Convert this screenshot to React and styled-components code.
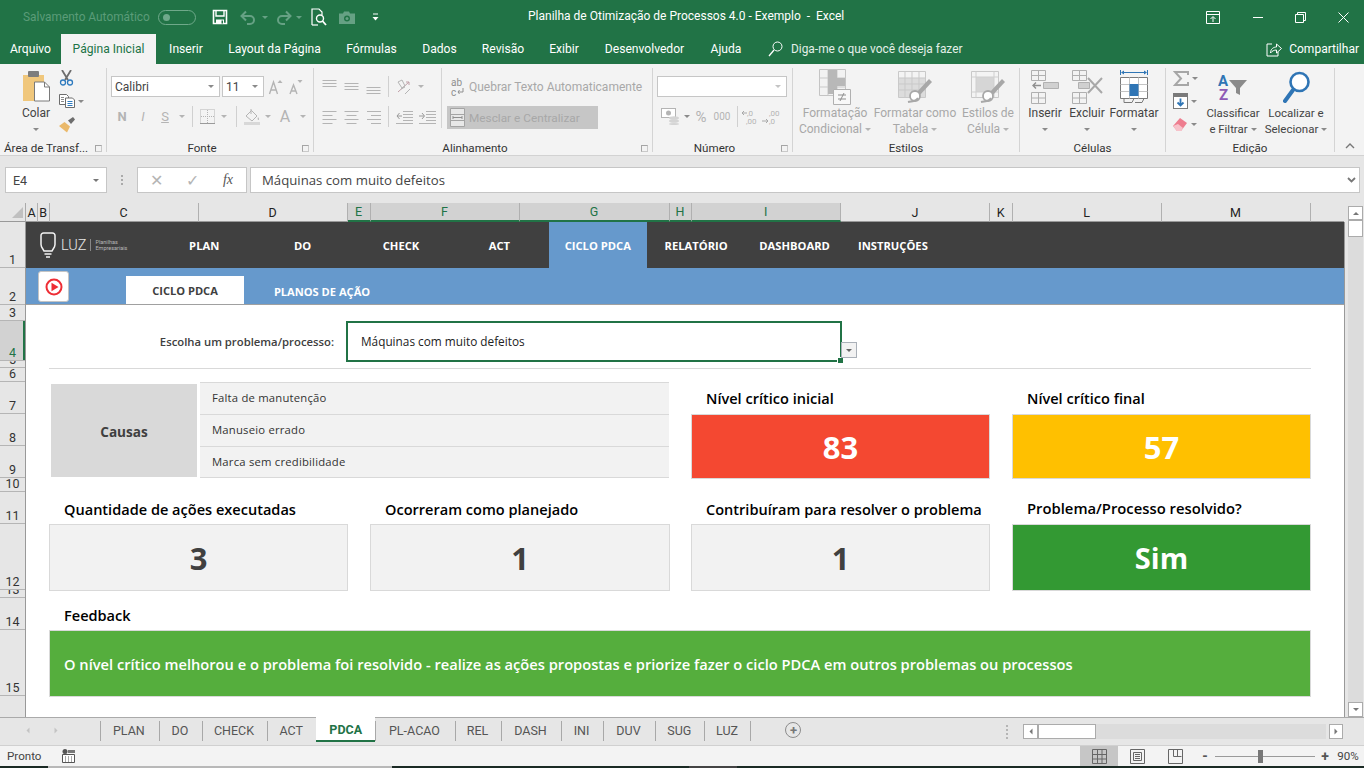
import React from 'react';
import styled, { createGlobalStyle } from 'styled-components';

const GREEN = '#217346';
const DIM = '#b4b4b4';
const UI = "Roboto, 'Liberation Sans', sans-serif";
const SHEET = "'Open Sans', 'Noto Sans', sans-serif";

const Global = createGlobalStyle`
  html, body { margin: 0; padding: 0; background: #e6e6e6; }
  * { box-sizing: border-box; }
`;

const Page = styled.div`
  width: 1364px;
  height: 768px;
  overflow: hidden;
  display: flex;
  flex-direction: column;
  font-family: ${UI};
  background: #e6e6e6;
`;

/* ---------- title bar ---------- */
const TitleBar = styled.div`
  position: relative;
  height: 34px;
  flex: none;
  background: ${GREEN};
  display: flex;
  align-items: center;
  padding-left: 23px;
  color: #fff;
  font-size: 12px;
`;
const AutoSave = styled.span`
  width: 135px;
  color: #5b9c79;
  font-size: 11.9px;
  white-space: nowrap;
`;
const Toggle = styled.span`
  width: 38px;
  height: 15px;
  border: 1px solid #6fa98a;
  border-radius: 8px;
  display: flex;
  align-items: center;
  padding-left: 4px;
  &::before { content: ''; width: 7px; height: 7px; border-radius: 50%; background: #6fa98a; }
`;
const Slot = styled.span`
  flex: none;
  width: ${p => p.$w}px;
  margin-left: ${p => p.$ml || 0}px;
  display: flex;
  align-items: center;
  justify-content: center;
  color: ${p => p.$c || DIM};
  font-family: ${p => p.$serif ? "'Liberation Serif', serif" : 'inherit'};
  font-size: ${p => p.$fs || 12}px;
  font-weight: ${p => p.$fw || 400};
  font-style: ${p => p.$it ? 'italic' : 'normal'};
  text-decoration: ${p => p.$ul ? 'underline' : 'none'};
`;
const WindowTitle = styled.span`
  position: absolute;
  left: 528px;
  top: 9px;
  font-size: 12px;
  white-space: pre;
`;
const WindowBtns = styled.div`
  margin-left: auto;
  display: flex;
  align-items: center;
`;

/* ---------- ribbon tabs ---------- */
const TabRow = styled.div`
  height: 30px;
  flex: none;
  background: ${GREEN};
  display: flex;
  color: #fff;
  font-size: 12.1px;
`;
const RibbonTab = styled.div`
  width: ${p => p.$w}px;
  display: flex;
  align-items: center;
  justify-content: center;
  white-space: nowrap;
  background: ${p => p.$on ? '#f3f3f3' : 'transparent'};
  color: ${p => p.$on ? GREEN : '#fff'};
`;
const Tell = styled.div`
  margin-left: 14px;
  display: flex;
  align-items: center;
  gap: 8px;
  color: #e3efe8;
  font-size: 11.9px;
  white-space: nowrap;
`;
const Share = styled.div`
  margin-left: auto;
  margin-right: 5px;
  display: flex;
  align-items: center;
  gap: 7px;
  font-size: 12px;
`;

/* ---------- ribbon ---------- */
const Ribbon = styled.div`
  height: 92px;
  flex: none;
  background: #f3f3f3;
  border-bottom: 1px solid #d2d2d2;
  display: flex;
  padding: 4px 0 0;
  font-size: 12px;
  color: #444;
`;
const Group = styled.div`
  position: relative;
  flex: none;
  width: ${p => p.$w}px;
  height: 84px;
  border-right: 1px solid #d4d4d4;
  display: flex;
  flex-direction: column;
`;
const GroupBody = styled.div`
  height: 73px;
  flex: none;
  display: flex;
  padding-left: ${p => p.$pl || 0}px;
`;
const Caption = styled.div`
  height: 14px;
  flex: none;
  line-height: 14px;
  text-align: ${p => p.$start ? 'left' : 'center'};
  padding: ${p => p.$start ? '0 0 0 4px' : p.$launch ? '0 16px 0 0' : '0'};
  font-size: 11.6px;
  color: #333;
  white-space: nowrap;
`;
const Launcher = styled.span`
  position: absolute;
  right: 4px;
  bottom: 0;
  width: 7px;
  height: 7px;
  border-left: 1px solid #a5a5a5;
  border-top: 1px solid #a5a5a5;
  border-right: 1px solid #c9c9c9;
  border-bottom: 1px solid #c9c9c9;
`;
const BigButton = styled.div`
  flex: none;
  width: ${p => p.$w}px;
  display: flex;
  flex-direction: column;
  align-items: center;
  color: ${p => p.$off ? '#a8a8a8' : '#444'};
  white-space: nowrap;
  font-size: ${p => p.$fs || 12}px;
`;
const BigIcon = styled.div`
  height: 37px;
  display: flex;
  align-items: center;
  justify-content: center;
`;
const Line = styled.div`
  height: 16px;
  line-height: 16px;
  display: flex;
  align-items: center;
  gap: 3px;
`;
const Caret = styled.span`
  display: inline-block;
  flex: none;
  width: 0;
  height: 0;
  border-left: 3px solid transparent;
  border-right: 3px solid transparent;
  border-top: 3px solid ${p => p.$c || '#8a8a8a'};
  transform: rotate(${p => p.$rot || 0}deg);
`;
const Stack = styled.div`
  flex: none;
  width: ${p => p.$w}px;
  margin-left: ${p => p.$ml || 0}px;
  display: flex;
  flex-direction: column;
  padding-top: ${p => p.$pt || 8}px;
  gap: ${p => p.$gap || 9}px;
  border-right: ${p => p.$edge ? '1px solid #d4d4d4' : 'none'};
  height: ${p => p.$edge ? '60px' : 'auto'};
`;
const ToolRow = styled.div`
  height: ${p => p.$h || 21}px;
  margin-top: ${p => p.$mt || 0}px;
  display: flex;
  align-items: center;
`;
const VSep = styled.span`
  flex: none;
  width: ${p => p.$w}px;
  display: flex;
  justify-content: center;
  align-self: center;
  &::before { content: ''; width: 1px; height: 21px; background: #d0d0d0; }
`;
const Combo = styled.div`
  width: ${p => p.$w}px;
  height: 21px;
  flex: none;
  background: #fff;
  border: 1px solid #c6c6c6;
  margin-right: 2px;
  display: flex;
  align-items: center;
  justify-content: space-between;
  padding: 0 5px 0 3px;
  color: #444;
  font-size: 12px;
`;
const WrapText = styled.span`
  color: #a8a8a8;
  font-size: 12px;
  white-space: nowrap;
`;
const MergeBtn = styled.div`
  width: 151px;
  height: 23px;
  background: #c6c6c6;
  display: flex;
  align-items: center;
  color: #a8a8a8;
  font-size: 11.8px;
  white-space: nowrap;
  padding-left: 3px;
  gap: 4px;
`;
const Collapse = styled.div`
  flex: 1;
  display: flex;
  align-items: flex-end;
  justify-content: center;
  padding-bottom: 6px;
`;

/* ---------- formula bar ---------- */
const FormulaBar = styled.div`
  height: 47px;
  flex: none;
  display: flex;
  align-items: flex-start;
  padding: 11px 4px 0 5px;
`;
const NameBox = styled.div`
  width: 102px;
  height: 26px;
  background: #fff;
  border: 1px solid #c6c6c6;
  display: flex;
  align-items: center;
  justify-content: space-between;
  padding: 0 7px;
  font-size: 12.5px;
  color: #444;
`;
const Dots = styled.div`
  width: 30px;
  height: 26px;
  display: flex;
  align-items: center;
  justify-content: center;
  flex-direction: column;
  gap: 2px;
  & i { width: 2px; height: 2px; background: #aaa; }
`;
const FxBox = styled.div`
  width: 110px;
  height: 26px;
  background: #fff;
  border: 1px solid #c6c6c6;
  display: flex;
  align-items: center;
  margin-right: 3px;
`;
const FormulaInput = styled.div`
  flex: 1;
  height: 26px;
  background: #fff;
  border: 1px solid #c6c6c6;
  display: flex;
  align-items: center;
  justify-content: space-between;
  padding: 0 3px 0 11px;
  font-family: ${SHEET};
  font-size: 13.2px;
  color: #444;
`;

/* ---------- grid area ---------- */
const ColHeaders = styled.div`
  height: 19px;
  flex: none;
  display: flex;
  padding-right: 20px;
`;
const Corner = styled.div`
  width: 26px;
  flex: none;
  display: flex;
  align-items: flex-end;
  justify-content: flex-end;
  padding: 0 2px 3px 0;
  border-right: 1px solid #aaa;
  border-bottom: 1px solid #999;
  &::before {
    content: '';
    width: 0; height: 0;
    border-left: 11px solid transparent;
    border-bottom: 11px solid #c0c0c0;
  }
`;
const ColHead = styled.div`
  width: ${p => p.$w}px;
  flex: ${p => p.$w ? 'none' : 1};
  display: flex;
  align-items: center;
  justify-content: center;
  font-size: 12.5px;
  color: ${p => p.$on ? GREEN : '#222'};
  background: ${p => p.$on ? '#d2d2d2' : 'transparent'};
  border-right: ${p => p.$w ? '1px solid #b0b0b0' : 'none'};
  border-bottom: ${p => p.$on ? `2px solid ${GREEN}` : '1px solid #999'};
`;
const Work = styled.div`
  height: 495px;
  flex: none;
  display: flex;
`;
const RowHeads = styled.div`
  width: 26px;
  flex: none;
  display: flex;
  flex-direction: column;
  border-right: 1px solid #999;
`;
const RowHead = styled.div`
  height: ${p => p.$h}px;
  flex: ${p => p.$h ? 'none' : 1};
  overflow: hidden;
  display: flex;
  align-items: flex-end;
  justify-content: center;
  font-size: 12.5px;
  line-height: 15px;
  color: ${p => p.$on ? GREEN : '#333'};
  background: ${p => p.$on ? '#d2d2d2' : 'transparent'};
  border-bottom: ${p => p.$h ? '1px solid #b5b5b5' : 'none'};
  box-shadow: ${p => p.$on ? `inset -2px 0 0 ${GREEN}` : 'none'};
`;
const Sheet = styled.div`
  width: 1319px;
  flex: none;
  background: #fff;
  border-right: 1px solid #999;
  font-family: ${SHEET};
  display: grid;
  grid-template-columns: 23px 149px 149px 23px 149px 150px 22px 149px 149px 23px 149px 149px 1fr;
  grid-template-rows: 46px 37px 16px 40px 7px 14px 32px 32px 32px 14px 32px 66px 8px 32px 66px 1fr;
`;
const NavBar = styled.div`
  grid-column: 1 / -1;
  grid-row: 1;
  background: #404040;
  display: flex;
  align-items: stretch;
  padding-left: 14px;
`;
const Logo = styled.div`
  width: 115px;
  display: flex;
  align-items: center;
  color: #e8e8e8;
`;
const LogoWord = styled.span`
  font-family: ${UI};
  font-weight: 300;
  font-size: 14.5px;
  margin: 0 4px 0 5px;
`;
const LogoTag = styled.span`
  border-left: 1px solid #888;
  padding-left: 4px;
  font-family: ${UI};
  font-size: 5.5px;
  line-height: 6px;
  color: #b8b8b8;
  white-space: nowrap;
`;
const NavItem = styled.div`
  width: 98.4px;
  display: flex;
  align-items: center;
  justify-content: center;
  color: #fff;
  font-size: 11.2px;
  font-weight: 700;
  white-space: nowrap;
  background: ${p => p.$on ? '#6699cc' : 'transparent'};
`;
const SubBar = styled.div`
  grid-column: 1 / -1;
  grid-row: 2;
  background: #6699cc;
  border-bottom: 1px solid #a0a0a0;
  display: flex;
  align-items: flex-end;
  padding-left: 12px;
`;
const VideoBtn = styled.div`
  width: 31px;
  height: 31px;
  align-self: flex-start;
  margin-top: 3px;
  margin-right: 57px;
  background: #fff;
  border: 1px solid #c4c4c4;
  border-radius: 3px;
  display: flex;
  align-items: center;
  justify-content: center;
`;
const SubTab = styled.div`
  width: ${p => p.$w}px;
  height: 28px;
  padding-top: ${p => p.$on ? 0 : 2}px;
  display: flex;
  align-items: center;
  justify-content: center;
  font-size: 11.1px;
  font-weight: 700;
  background: ${p => p.$on ? '#fff' : 'transparent'};
  color: ${p => p.$on ? '#404040' : '#fff'};
  white-space: nowrap;
`;
const ProblemLabel = styled.div`
  grid-column: 2 / 4;
  grid-row: 4;
  display: flex;
  align-items: center;
  justify-content: flex-end;
  padding: 1px 13px 0 0;
  font-size: 11.3px;
  font-weight: 600;
  color: #404040;
`;
const ProblemCell = styled.div`
  grid-column: 4 / 9;
  grid-row: 4;
  position: relative;
  margin: 0 -2px -1px -1px;
  border: 2px solid ${GREEN};
  display: flex;
  align-items: center;
  padding: 0 0 2px 13px;
  font-size: 11.8px;
  color: #222;
  background: #fff;
`;
const FillHandle = styled.span`
  position: absolute;
  right: -3px;
  bottom: -3px;
  width: 5px;
  height: 5px;
  background: ${GREEN};
  border: 1px solid #fff;
  box-sizing: content-box;
  margin: -1px;
`;
const DropBtn = styled.span`
  position: absolute;
  left: 100%;
  top: 19px;
  margin-left: 1px;
  width: 16px;
  height: 16px;
  background: #f2f2f2;
  border: 1px solid #aab0b8;
  display: flex;
  align-items: center;
  justify-content: center;
`;
const Divider = styled.div`
  grid-column: 2 / 13;
  grid-row: 5;
  align-self: end;
  height: 1px;
  margin: 0 -1px -1px 0;
  background: #d9d9d9;
`;
const CausesHead = styled.div`
  grid-column: 2;
  grid-row: 7 / 10;
  margin: 2px 1px 1px 2px;
  padding-top: 2px;
  background: #d9d9d9;
  display: flex;
  align-items: center;
  justify-content: center;
  font-size: 13.6px;
  font-weight: 700;
  color: #404040;
`;
const CausesList = styled.div`
  grid-column: 3 / 7;
  grid-row: 7 / 10;
  margin-left: 2px;
  display: grid;
  grid-template-rows: 32px 32px 31px;
  border-top: 1px solid #d9d9d9;
`;
const CauseRow = styled.div`
  display: flex;
  align-items: center;
  padding: 0 0 2px 12px;
  background: #f2f2f2;
  border-bottom: 1px solid #d9d9d9;
  font-size: 11.3px;
  letter-spacing: .2px;
  color: #333;
`;
const MetricLabel = styled.div`
  grid-column: ${p => p.$col};
  grid-row: ${p => p.$row};
  align-self: center;
  padding: ${p => p.$low ? '2px' : '0'} 0 0 15px;
  font-size: ${p => p.$fs || 14.55}px;
  font-weight: 600;
  color: #000;
  white-space: nowrap;
`;
const MetricValue = styled.div`
  grid-column: ${p => p.$col};
  grid-row: ${p => p.$row};
  margin: 0 -1px -1px 0;
  border: 1px solid #d9d9d9;
  background: ${p => p.$bg || '#f2f2f2'};
  color: ${p => p.$bg ? '#fff' : '#404040'};
  display: flex;
  align-items: center;
  justify-content: center;
  font-size: ${p => p.$fs || 31}px;
  font-weight: 700;
`;
const Feedback = styled.div`
  grid-column: 2 / 13;
  grid-row: 15;
  margin: 0 -1px -1px 0;
  background: #55ae3d;
  border: 1px solid #d9d9d9;
  color: #fff;
  display: flex;
  align-items: center;
  padding: 0 0 0 14px;
  font-size: 14.67px;
  font-weight: 600;
  white-space: nowrap;
`;

/* ---------- scroll bars ---------- */
const VScroll = styled.div`
  flex: 1;
  margin-top: -16px;
  padding-left: 3px;
  padding-right: 1px;
  display: flex;
  flex-direction: column;
`;
const VTrack = styled.div`
  flex: 1;
  background: #dcdcdc;
  display: flex;
  flex-direction: column;
`;
const ScrollBtn = styled.div`
  flex: none;
  height: ${p => p.$h || 15}px;
  width: ${p => p.$w ? p.$w + 'px' : 'auto'};
  background: #fff;
  border: 1px solid #ababab;
  display: flex;
  align-items: center;
  justify-content: center;
`;
const Thumb = styled.div`
  flex: none;
  width: ${p => p.$w ? p.$w + 'px' : 'auto'};
  height: ${p => p.$h}px;
  background: #fff;
  border: 1px solid #ababab;
`;
const Spacer = styled.div`flex: 1;`;

/* ---------- sheet tabs ---------- */
const SheetTabs = styled.div`
  height: 28px;
  flex: none;
  border-top: 1px solid #aaa;
  display: flex;
  align-items: flex-start;
  padding-left: 100px;
  font-size: 12.5px;
  color: #555;
`;
const SheetTab = styled.div`
  width: ${p => p.$w}px;
  height: ${p => p.$on ? '25px' : '20px'};
  margin-top: ${p => p.$on ? '-1px' : '3px'};
  padding: ${p => p.$on ? '2px 0 0' : '0 2px 1px 0'};
  flex: none;
  display: flex;
  align-items: center;
  justify-content: center;
  border-left: ${p => p.$on ? 'none' : '1px solid #a8a8a8'};
  border-right: ${p => p.$last ? '1px solid #a8a8a8' : 'none'};
  background: ${p => p.$on ? '#fff' : 'transparent'};
  color: ${p => p.$on ? GREEN : '#555'};
  font-weight: ${p => p.$on ? 700 : 400};
  border-bottom: ${p => p.$on ? `2px solid ${GREEN}` : 'none'};
`;
const Plus = styled.div`
  margin: 4px 0 0 34px;
  width: 16px;
  height: 16px;
  border: 1px solid #8c8c8c;
  border-radius: 50%;
  display: flex;
  align-items: center;
  justify-content: center;
  color: #777;
  font-size: 13px;
  font-weight: 700;
  line-height: 1;
`;
const HScroll = styled.div`
  position: absolute;
  left: 1023px;
  top: 7px;
  width: 320px;
  height: 15px;
  display: flex;
`;
const HTrack = styled.div`
  flex: 1;
  display: flex;
  background: #dcdcdc;
  margin-right: 3px;
`;
const TabsWrap = styled.div`
  position: relative;
  flex: none;
`;
const NavArrows = styled.div`
  position: absolute;
  left: 25px;
  top: 12px;
  display: flex;
  gap: 22px;
`;
const TabDots = styled.div`
  position: absolute;
  left: 1006px;
  top: 8px;
  display: flex;
  flex-direction: column;
  gap: 2px;
  & i { width: 2px; height: 2px; background: #b5b5b5; display: block; }
`;

/* ---------- status bar ---------- */
const StatusBar = styled.div`
  height: 21px;
  flex: none;
  background: #f3f3f3;
  border-top: 1px solid #d0d0d0;
  display: flex;
  align-items: stretch;
  padding-left: 7px;
  font-size: 11.6px;
  color: #444;
`;
const Ready = styled.div`
  width: 55px;
  display: flex;
  align-items: center;
`;
const ViewBtn = styled.div`
  width: 38px;
  display: flex;
  align-items: center;
  justify-content: center;
  background: ${p => p.$on ? '#c6c6c6' : 'transparent'};
`;
const Zoom = styled.div`
  display: flex;
  align-items: center;
  margin-left: 4px;
`;
const ZoomTrack = styled.div`
  position: relative;
  width: 100px;
  height: 1px;
  background: #9a9a9a;
  margin: 0 3px;
  &::before {
    content: '';
    position: absolute;
    left: 43px;
    top: -6px;
    width: 5px;
    height: 13px;
    background: #777;
  }
`;
const Taskbar = styled.div`
  height: 2px;
  flex: none;
  display: flex;
  background: #1a2a24;
`;
const TaskPart = styled.div`
  width: ${p => p.$w}px;
  background: ${p => p.$c};
`;

/* ---------- icons ---------- */
const Ico = ({ w = 16, h = 16, children }) => (
  <svg width={w} height={h} viewBox={`0 0 ${w} ${h}`} fill="none">{children}</svg>
);

const SaveIcon = () => (
  <Ico w={16} h={16}>
    <path d="M1.5 1.5h13v13h-13z" stroke="#fff" strokeWidth="1.6" />
    <path d="M4 2v5h8V2" stroke="#fff" strokeWidth="1.4" />
    <path d="M4 15v-4.5h8V15" fill="#fff" />
    <rect x="9.5" y="11.5" width="1.5" height="3" fill={GREEN} />
  </Ico>
);
const UndoIcon = ({ flip }) => (
  <Ico w={16} h={15}>
    <g transform={flip ? 'translate(16 0) scale(-1 1)' : undefined}>
      <path d="M2 6h8a4 4 0 0 1 0 8H7" stroke="#66a184" strokeWidth="2" />
      <path d="M6 1.5 1.5 6 6 10.5" stroke="#66a184" strokeWidth="2" />
    </g>
  </Ico>
);
const PreviewIcon = () => (
  <Ico w={16} h={18}>
    <path d="M1 17V1h7l3 3v3" stroke="#fff" strokeWidth="1.2" />
    <path d="M1 17h6" stroke="#fff" strokeWidth="1.2" />
    <circle cx="9" cy="10.5" r="3.5" stroke="#fff" strokeWidth="1.4" />
    <path d="m11.5 13 3.5 4" stroke="#fff" strokeWidth="1.8" />
  </Ico>
);
const CameraIcon = () => (
  <Ico w={16} h={13}>
    <path d="M0 2.5h4L5 .5h5l1 2h5V13H0z" fill="#66a184" />
    <circle cx="8" cy="7.5" r="3" fill={GREEN} />
    <circle cx="8" cy="7.5" r="1.5" fill="#66a184" />
  </Ico>
);
const QuickCaret = () => (
  <Ico w={7} h={8}>
    <path d="M1 1h5" stroke="#fff" />
    <path d="M.5 4h6L3.5 7.5z" fill="#fff" />
  </Ico>
);
const DisplayIcon = () => (
  <Ico w={14} h={13}>
    <path d="M.5.5h13v12H.5z" stroke="#fff" />
    <path d="M1 3.5h12" stroke="#fff" />
    <path d="M7 11V6M4.5 8 7 5.5 9.5 8" stroke="#fff" />
  </Ico>
);
const Minimize = () => <Ico w={11} h={11}><path d="M0 5.5h10" stroke="#fff" /></Ico>;
const Restore = () => (
  <Ico w={11} h={11}>
    <path d="M.5 2.5h8v8h-8z" stroke="#fff" />
    <path d="M2.5 2.5v-2h8v8h-2" stroke="#fff" />
  </Ico>
);
const CloseX = () => <Ico w={11} h={11}><path d="m.5.5 10 10M10.5.5l-10 10" stroke="#fff" /></Ico>;
const SearchThin = () => (
  <Ico w={15} h={16}>
    <circle cx="9.5" cy="5.5" r="4.5" stroke="#fff" />
    <path d="M6 9 1 15" stroke="#fff" strokeWidth="1.3" />
  </Ico>
);
const ShareIcon = () => (
  <Ico w={16} h={15}>
    <path d="M6 2H1v12h11V10" stroke="#fff" />
    <path d="M4.5 11c0-4 3-6 6-6V2l5 4.5-5 4.5V8c-2.5 0-4.5 1-6 3z" stroke="#fff" />
  </Ico>
);
const PasteIcon = () => (
  <Ico w={30} h={31}>
    <path d="M2 4h21v26H2z" fill="#f0c77c" />
    <rect x="7" y="0" width="11" height="6" rx="1" fill="#7d7d7d" />
    <path d="M13.5 11h10l5 5v14h-15z" fill="#fff" stroke="#7a7a7a" />
    <path d="M23.5 11v5h5" stroke="#7a7a7a" />
  </Ico>
);
const CutIcon = () => (
  <Ico w={15} h={16}>
    <path d="M3 0l6 10M12 0 6 10" stroke="#6d6d6d" strokeWidth="1.8" />
    <circle cx="4" cy="12.5" r="2.5" stroke="#2f7bbf" strokeWidth="1.3" />
    <circle cx="11" cy="12.5" r="2.5" stroke="#2f7bbf" strokeWidth="1.3" />
  </Ico>
);
const CopyIcon = () => (
  <Ico w={16} h={14}>
    <path d="M.5.5h7l2 2v8h-9z" fill="#fff" stroke="#6d6d6d" />
    <path d="M6.5 4h7l2 2v7.5h-9z" fill="#fff" stroke="#6d6d6d" />
    <path d="M8.5 7.5h5M8.5 9.5h5M8.5 11.5h5" stroke="#2f7bbf" />
    <path d="M2 3.5h3M2 5.5h3M2 7.5h3" stroke="#8a8a8a" />
  </Ico>
);
const BrushIcon = () => (
  <Ico w={16} h={16}>
    <path d="M9 3.5 14 0l2 2.5-4 4.5z" fill="#6d6d6d" />
    <path d="M5.5 5 11 9.5 8 15.5 0 9z" fill="#eab96b" />
  </Ico>
);
const FontA = ({ s = 16, up, dn }) => (
  <svg width="16" height="16" viewBox="0 0 16 16" fill="none">
    <path d={s > 13 ? 'M1.5 15 5.5 3l4 12M3 11h5' : 'M2 15l3.5-9 3.5 9M3.5 12h4'} stroke={DIM} strokeWidth="1.4" />
    {up && <path d="m9.5 4 2.5-3 2.5 3z" fill={DIM} />}
    {dn && <path d="m9.5 1 2.5 3 2.5-3z" fill={DIM} />}
  </svg>
);
const BordersIcon = () => (
  <Ico w={15} h={15}>
    <path d="M.5.5h14v14H.5z" stroke={DIM} strokeDasharray="1 1" />
    <path d="M7.5 1v13M1 7.5h13" stroke={DIM} strokeDasharray="1 1" />
    <path d="M0 14.5h15" stroke="#9a9a9a" />
  </Ico>
);
const FillIcon = () => (
  <Ico w={16} h={17}>
    <path d="M2 8 7.5 2.5 13 8l-5 5z" stroke={DIM} />
    <path d="M7 1v5" stroke={DIM} />
    <path d="M14 9c1 1.5 1.5 2.5.5 3-1 0-1-1.5-.5-3z" fill={DIM} />
    <rect x="0" y="14" width="16" height="3" fill="#d8d8d8" />
  </Ico>
);
const AlignLines = ({ a = 'left', v }) => {
  const ys = v === 'top' ? [1, 4, 7] : v === 'mid' ? [4, 7, 10] : v === 'bot' ? [8, 11, 14] : [2, 6, 10, 14];
  const widths = ys.length === 3 ? [14, 14, 14] : [14, 10, 14, 10];
  return (
    <Ico w={15} h={15}>
      {ys.map((y, i) => {
        const wd = widths[i];
        const x = a === 'center' ? (15 - wd) / 2 : a === 'right' ? 15 - wd : 0.5;
        return <path key={y} d={`M${x} ${y}.5h${wd}`} stroke={DIM} />;
      })}
    </Ico>
  );
};
const OrientIcon = () => (
  <Ico w={16} h={16}>
    <path d="m2 13 11-10M13 3l-3 0M13 3v3" stroke="#c0a0a8" />
    <path d="M2 3 6 1l3 6-3 2zM5 10l4-2" stroke={DIM} />
    <path d="M9 15l5-5" stroke={DIM} />
  </Ico>
);
const IndentIcon = ({ out }) => (
  <Ico w={17} h={14}>
    <path d="M7 1.5h10M7 4.5h10M7 7.5h10M7 10.5h10M0 13.5h17" stroke={DIM} />
    {out
      ? <path d="M6 6H1M3.5 3 1 6l2.5 3" stroke="#9a9a9a" />
      : <path d="M0 6h5M3 3l2.5 3L3 9" stroke="#9a9a9a" />}
  </Ico>
);
const WrapIcon = () => (
  <svg width="16" height="20" viewBox="0 0 16 20" fill="none">
    <text x="1" y="9" fontSize="10" fontFamily="Roboto" fill="#8f8f8f">ab</text>
    <text x="1" y="19" fontSize="10" fontFamily="Roboto" fill="#8f8f8f">c</text>
    <path d="M13 11v4H8M9.5 13 8 15l1.5 2" stroke="#8f8f8f" />
  </svg>
);
const MergeIcon = () => (
  <Ico w={15} h={19}>
    <path d="M.5.5h14v18H.5zM.5 6.5h14M.5 12.5h14" stroke="#a4a4a4" fill="#e8e8e8" />
    <path d="M3 9.5h9M3 8v3M12 8v3" stroke="#8f8f8f" />
  </Ico>
);
const MoneyIcon = () => (
  <Ico w={19} h={17}>
    <rect x=".5" y=".5" width="14" height="9" fill="#fff" stroke={DIM} />
    <circle cx="7.5" cy="5" r="2.5" fill={DIM} />
    <ellipse cx="13" cy="10" rx="5" ry="1.8" fill="#d4d4d4" />
    <ellipse cx="13" cy="13" rx="5" ry="1.8" fill="#d4d4d4" />
    <ellipse cx="13" cy="16" rx="5" ry="1" fill="#d4d4d4" />
  </Ico>
);
const DecimalIcon = ({ more }) => (
  <svg width="20" height="18" viewBox="0 0 20 18" fill="none">
    <text x={more ? 8 : 6} y="8" fontSize="8" fontFamily="Roboto" fill={DIM}>{more ? ',00' : ',0'}</text>
    <text x={more ? 8 : 5} y="16" fontSize="8" fontFamily="Roboto" fill={DIM}>{more ? ',0' : ',00'}</text>
    <path d={more ? 'M1 13h6M5 11l2 2-2 2' : 'M1 5h5M3 3 1 5l2 2'} stroke="#a8a8a8" />
  </svg>
);
const CondIcon = () => (
  <Ico w={32} h={36}>
    <path d="M.5.5h26v26H.5z" fill="#f2f2f2" stroke="#c4c4c4" />
    <path d="M9 .5v26M18 .5v26M.5 9h26M.5 18h26" stroke="#c9c9c9" />
    <path d="M9 1h9v8h8v8H18v8H9z" fill="#b8b8b8" />
    <path d="M14.5 20.5h17v15h-17z" fill="#f8f8f8" stroke="#b0b0b0" />
    <path d="M19 26h8M19 30h8M25 24l-4 8" stroke="#8f8f8f" />
  </Ico>
);
const TableIcon = ({ big }) => (
  <Ico w={34} h={32}>
    <path d="M.5.5h27v26H.5z" fill="#f4f4f4" stroke="#c9c9c9" />
    {big ? (
      <>
        <path d="M5 6h18v15H5z" fill="#d6d6d6" />
        <path d="M.5 6h27M5 .5v26M23 .5v26M.5 21h27" stroke="#d0d0d0" />
      </>
    ) : (
      <>
        <path d="M1 7h26v19H1z" fill="#dcdcdc" />
        <path d="M.5 7h27M.5 13h27M.5 19h27M7 .5v26M14 .5v26M21 .5v26" stroke="#c9c9c9" />
      </>
    )}
    <path d="m18 22 13-14 3 3-13 14z" fill="#a8a8a8" />
    <circle cx="17" cy="25" r="5" fill="#fff" stroke="#a8a8a8" strokeWidth="1.8" />
    <path d="M10 31c4-1 8 0 10-4" stroke="#a8a8a8" strokeWidth="2" />
  </Ico>
);
const InsertCellIcon = () => (
  <Ico w={28} h={34}>
    <path d="M.5.5h14v10H.5zM.5 5.5h14M7.5.5v10" stroke="#b0b0b0" />
    <path d="M12.5 12.5h15v6h-15z" fill="#d0d0d0" stroke="#b0b0b0" />
    <path d="M10 15.5H2M5 12.5l-3 3 3 3" stroke="#8f8f8f" strokeWidth="1.4" />
    <path d="M.5 22.5h14v11H.5zM.5 28h14M7.5 22.5v11" stroke="#b0b0b0" />
  </Ico>
);
const DeleteCellIcon = () => (
  <Ico w={31} h={34}>
    <path d="M.5.5h14v10H.5zM.5 5.5h14M7.5.5v10" stroke="#b0b0b0" />
    <path d="M6.5 12.5h11v6h-11z" fill="#d0d0d0" stroke="#b0b0b0" />
    <path d="m16 8 14 15M30 8 16 23" stroke="#a8a8a8" strokeWidth="2" />
    <path d="M.5 22.5h14v11H.5zM.5 28h14M7.5 22.5v11" stroke="#b0b0b0" />
  </Ico>
);
const FormatCellIcon = () => (
  <Ico w={28} h={36}>
    <path d="M2 3.5h24M.5 1v5M27.5 1v5" stroke="#2f75b5" />
    <path d="M1 3.5 4 1.5v4zM27 3.5l-3-2v4z" fill="#2f75b5" />
    <path d="M.5 8.5h27v21H.5z" fill="#fff" stroke="#7a7a7a" />
    <path d="M9.5 8.5v21M18.5 8.5v21M.5 15.5h27M.5 22.5h27" stroke="#c4c4c4" />
    <path d="M9.5 15h9v12h-9z" fill="#2f75b5" />
    <path d="M4 29.5v4h8l2-4M15 33.5h7l2-4" stroke="#7a7a7a" />
  </Ico>
);
const SigmaIcon = () => (
  <Ico w={16} h={15}><path d="M15 4V1H2l6 6.5L2 14h13v-3" stroke="#a6a6a6" strokeWidth="2" /></Ico>
);
const FillDownIcon = () => (
  <Ico w={15} h={16}>
    <rect x=".5" y=".5" width="14" height="15" fill="#fff" stroke="#7a7a7a" />
    <rect x="1" y="1" width="13" height="3" fill="#7a7a7a" />
    <path d="M7.5 5.5v7M4.5 9.5l3 3 3-3" stroke="#2f75b5" strokeWidth="1.8" />
  </Ico>
);
const EraserIcon = () => (
  <Ico w={14} h={13}>
    <path d="m0 8 7-8 7 5-6 8H4z" fill="#ee7d8f" />
    <path d="m0 8 4 5h4l2-3-5-4z" fill="#f7c2ca" />
  </Ico>
);
const SortIcon = () => (
  <svg width="30" height="30" viewBox="0 0 30 30" fill="none">
    <text x="0" y="14" fontSize="15" fontWeight="700" fontFamily="Roboto" fill="#2f75b5">A</text>
    <text x="1" y="28" fontSize="15" fontWeight="700" fontFamily="Roboto" fill="#8e5bb5">Z</text>
    <path d="M11 8h18l-7 8v7l-4-2v-5z" fill="#8a8a8a" />
  </svg>
);
const FindIcon = () => (
  <Ico w={27} h={32}>
    <circle cx="16.5" cy="11" r="9" stroke="#2f75b5" strokeWidth="2.6" fill="#fff" />
    <path d="M10 19 2 30" stroke="#2f75b5" strokeWidth="4" strokeLinecap="round" />
  </Ico>
);
const CollapseArrow = () => <Ico w={10} h={6}><path d="m1 5 4-4 4 4" stroke="#777" strokeWidth="1.4" /></Ico>;
const ChevronDown = () => <Ico w={9} h={6}><path d="m1 1 3.5 3.5L8 1" stroke="#777" strokeWidth="1.8" /></Ico>;
const BulbLogo = () => (
  <Ico w={16} h={26}>
    <path d="M3.5 1h9A2.5 2.5 0 0 1 15 3.5v9c0 3-2.5 5-3 6.5H4c-.5-1.500-3-3.500-3-6.500v-9A2.5 2.5 0 0 1 3.5 1z" stroke="#f2f2f2" strokeWidth="1.5" />
    <path d="M4.5 22h7M6 25h4" stroke="#f2f2f2" strokeWidth="1.5" />
  </Ico>
);
const PlayBadge = () => (
  <Ico w={18} h={18}>
    <circle cx="9" cy="9" r="7.5" stroke="#ee2d35" strokeWidth="2" />
    <path d="M6.5 4.8 13.5 9l-7 4.2z" fill="#ee2d35" />
  </Ico>
);
const MacroIcon = () => (
  <Ico w={13} h={14}>
    <circle cx="3" cy="2.5" r="2.5" fill="#555" />
    <rect x="6" y="1" width="7" height="3" fill="#777" />
    <path d="M.5 5.5h12v8H.5z" stroke="#555" fill="#fff" />
    <path d="M3 8h1M6 8h1M9 8h1M3 10h1M6 10h1M9 10h1M3 12h1M6 12h1M9 12h1" stroke="#555" />
  </Ico>
);
const GridView = () => (
  <Ico w={15} h={15}><path d="M.5.5h14v14H.5zM.5 5.5h14M.5 10h14M5.5.5v14M10 .5v14" stroke="#666" /></Ico>
);
const PageView = () => (
  <Ico w={15} h={15}>
    <path d="M.5.5h14v14H.5z" stroke="#666" />
    <path d="M3.5 3.5h8v8h-8zM5 5.5h5M5 7.5h5M5 9.5h5" stroke="#666" />
  </Ico>
);
const BreakView = () => (
  <Ico w={15} h={15}><path d="M.5.5h14v14H.5zM5.5.5v7h8M9.5.5v7" stroke="#666" /></Ico>
);

/* ---------- data ---------- */
const ribbonTabs = [
  ['Arquivo', 61], ['Página Inicial', 95, true], ['Inserir', 60], ['Layout da Página', 117], ['Fórmulas', 77],
  ['Dados', 59], ['Revisão', 68], ['Exibir', 54], ['Desenvolvedor', 107], ['Ajuda', 56],
];
const columns = [
  ['A', 12], ['B', 11.5], ['C', 149], ['D', 149], ['E', 23, true], ['F', 149, true], ['G', 150, true], ['H', 22, true],
  ['I', 149.5, true], ['J', 149], ['K', 22.5], ['L', 149], ['M', 149], ['', 0],
];
const rows = [[1, 46], [2, 37], [3, 16], [4, 40, true], [5, 7], [6, 14], [7, 32], [8, 32], [9, 32], [10, 14], [11, 32], [12, 66], [13, 8], [14, 32], [15, 66]];
const navItems = ['PLAN', 'DO', 'CHECK', 'ACT', 'CICLO PDCA', 'RELATÓRIO', 'DASHBOARD', 'INSTRUÇÕES'];
const sheetTabs = [
  ['PLAN', 58.7], ['DO', 43.3], ['CHECK', 65], ['ACT', 49.5], ['PDCA', 58.5, true], ['PL-ACAO', 80], ['REL', 46], ['DASH', 60],
  ['INI', 42], ['DUV', 52], ['SUG', 49.5], ['LUZ', 47, false, true],
];

export default function App() {
  return (
    <Page>
      <Global />

      <TitleBar>
        <AutoSave>Salvamento Automático</AutoSave>
        <Toggle />
        <Slot $w={16} $ml={16}><SaveIcon /></Slot>
        <Slot $w={26} $ml={7}><UndoIcon /></Slot>
        <Slot $w={8}><Caret $c="#66a184" /></Slot>
        <Slot $w={26} $ml={2}><UndoIcon flip /></Slot>
        <Slot $w={4}><Caret $c="#66a184" /></Slot>
        <Slot $w={36}><PreviewIcon /></Slot>
        <Slot $w={20}><CameraIcon /></Slot>
        <Slot $w={36}><QuickCaret /></Slot>
        <WindowTitle>Planilha de Otimização de Processos 4.0 - Exemplo  -  Excel</WindowTitle>
        <WindowBtns>
          <Slot $w={50}><DisplayIcon /></Slot>
          <Slot $w={40}><Minimize /></Slot>
          <Slot $w={44}><Restore /></Slot>
          <Slot $w={42}><CloseX /></Slot>
        </WindowBtns>
      </TitleBar>

      <TabRow>
        {ribbonTabs.map(([t, w, on]) => <RibbonTab key={t} $w={w} $on={on}>{t}</RibbonTab>)}
        <Tell><SearchThin />Diga-me o que você deseja fazer</Tell>
        <Share><ShareIcon />Compartilhar</Share>
      </TabRow>

      <Ribbon>
        <Group $w={107}>
          <GroupBody $pl={16}>
            <BigButton $w={40}>
              <BigIcon><PasteIcon /></BigIcon>
              <Line>Colar</Line>
              <Line><Caret /></Line>
            </BigButton>
            <Stack $w={34} $pt={2} $gap={7} $ml={3}>
              <ToolRow $h={16}><CutIcon /></ToolRow>
              <ToolRow $h={16}><CopyIcon /><Slot $w={12}><Caret /></Slot></ToolRow>
              <ToolRow $h={16} $mt={1}><BrushIcon /></ToolRow>
            </Stack>
          </GroupBody>
          <Caption $start>Área de Transf...</Caption>
          <Launcher />
        </Group>

        <Group $w={207}>
          <GroupBody $pl={4}>
            <Stack $w={200}>
              <ToolRow>
                <Combo $w={109}>Calibri<Caret /></Combo>
                <Combo $w={42}>11<Caret /></Combo>
                <Slot $w={20}><FontA up /></Slot>
                <Slot $w={20}><FontA s={12} dn /></Slot>
              </ToolRow>
              <ToolRow>
                <Slot $w={22} $fw={700} $fs={13}>N</Slot>
                <Slot $w={20} $it $fs={13}>I</Slot>
                <Slot $w={24} $fs={13} $ul>S</Slot>
                <Slot $w={10}><Caret $c={DIM} /></Slot>
                <VSep $w={10} />
                <Slot $w={20}><BordersIcon /></Slot>
                <Slot $w={14}><Caret $c={DIM} /></Slot>
                <VSep $w={10} />
                <Slot $w={22}><FillIcon /></Slot>
                <Slot $w={10}><Caret $c={DIM} /></Slot>
                <Slot $w={24} $fs={16}>A</Slot>
                <Slot $w={12}><Caret $c={DIM} /></Slot>
              </ToolRow>
            </Stack>
          </GroupBody>
          <Caption $launch>Fonte</Caption>
          <Launcher />
        </Group>

        <Group $w={339}>
          <GroupBody $pl={4}>
            <Stack $w={124} $edge $pt={8}>
              <ToolRow>
                <Slot $w={22}><AlignLines v="top" /></Slot>
                <Slot $w={22}><AlignLines v="mid" /></Slot>
                <Slot $w={22}><AlignLines v="bot" /></Slot>
                <VSep $w={8} />
                <Slot $w={24}><OrientIcon /></Slot>
                <Slot $w={10}><Caret $c={DIM} /></Slot>
              </ToolRow>
              <ToolRow>
                <Slot $w={22}><AlignLines a="left" /></Slot>
                <Slot $w={22}><AlignLines a="center" /></Slot>
                <Slot $w={22}><AlignLines a="right" /></Slot>
                <VSep $w={8} />
                <Slot $w={24}><IndentIcon out /></Slot>
                <Slot $w={22}><IndentIcon /></Slot>
              </ToolRow>
            </Stack>
            <Stack $w={170} $pt={8} $gap={9} $ml={5}>
              <ToolRow><Slot $w={22}><WrapIcon /></Slot><WrapText>Quebrar Texto Automaticamente</WrapText></ToolRow>
              <MergeBtn><MergeIcon />Mesclar e Centralizar</MergeBtn>
            </Stack>
          </GroupBody>
          <Caption $launch>Alinhamento</Caption>
          <Launcher />
        </Group>

        <Group $w={140}>
          <GroupBody $pl={4}>
            <Stack $w={134}>
              <ToolRow><Combo $w={130}><span /><Caret $c="#c4c4c4" /></Combo></ToolRow>
              <ToolRow>
                <Slot $w={26}><MoneyIcon /></Slot>
                <Slot $w={8}><Caret /></Slot>
                <Slot $w={20} $fs={15}>%</Slot>
                <Slot $w={22} $fs={10}>000</Slot>
                <VSep $w={8} />
                <Slot $w={20}><DecimalIcon /></Slot>
                <Slot $w={20}><DecimalIcon more /></Slot>
              </ToolRow>
            </Stack>
          </GroupBody>
          <Caption $launch>Número</Caption>
          <Launcher />
        </Group>

        <Group $w={227}>
          <GroupBody>
            <BigButton $w={84} $off>
              <BigIcon><CondIcon /></BigIcon>
              <Line>Formatação</Line>
              <Line>Condicional <Caret $c={DIM} /></Line>
            </BigButton>
            <BigButton $w={76} $off>
              <BigIcon><TableIcon /></BigIcon>
              <Line>Formatar como</Line>
              <Line>Tabela <Caret $c={DIM} /></Line>
            </BigButton>
            <BigButton $w={70} $off>
              <BigIcon><TableIcon big /></BigIcon>
              <Line>Estilos de</Line>
              <Line>Célula <Caret $c={DIM} /></Line>
            </BigButton>
          </GroupBody>
          <Caption>Estilos</Caption>
        </Group>

        <Group $w={146}>
          <GroupBody $pl={2}>
            <BigButton $w={46}>
              <BigIcon><InsertCellIcon /></BigIcon>
              <Line>Inserir</Line>
              <Line><Caret /></Line>
            </BigButton>
            <BigButton $w={38}>
              <BigIcon><DeleteCellIcon /></BigIcon>
              <Line>Excluir</Line>
              <Line><Caret /></Line>
            </BigButton>
            <BigButton $w={56}>
              <BigIcon><FormatCellIcon /></BigIcon>
              <Line>Formatar</Line>
              <Line><Caret /></Line>
            </BigButton>
          </GroupBody>
          <Caption>Células</Caption>
        </Group>

        <Group $w={169}>
          <GroupBody $pl={7}>
            <Stack $w={31} $pt={2} $gap={7}>
              <ToolRow $h={16}><SigmaIcon /><Slot $w={12}><Caret /></Slot></ToolRow>
              <ToolRow $h={16}><FillDownIcon /><Slot $w={12}><Caret /></Slot></ToolRow>
              <ToolRow $h={16}><EraserIcon /><Slot $w={14}><Caret /></Slot></ToolRow>
            </Stack>
            <BigButton $w={58} $fs={11.4}>
              <BigIcon><SortIcon /></BigIcon>
              <Line>Classificar</Line>
              <Line>e Filtrar <Caret /></Line>
            </BigButton>
            <BigButton $w={68} $fs={11.5}>
              <BigIcon><FindIcon /></BigIcon>
              <Line>Localizar e</Line>
              <Line>Selecionar <Caret /></Line>
            </BigButton>
          </GroupBody>
          <Caption>Edição</Caption>
        </Group>
        <Collapse><CollapseArrow /></Collapse>
      </Ribbon>

      <FormulaBar>
        <NameBox>E4<Caret $c="#777" /></NameBox>
        <Dots><i /><i /><i /></Dots>
        <FxBox>
          <Slot $w={36} $fs={16}>✕</Slot>
          <Slot $w={36} $fs={16}>✓</Slot>
          <Slot $w={36} $c="#555" $it $fs={14} $serif>fx</Slot>
        </FxBox>
        <FormulaInput>Máquinas com muito defeitos<ChevronDown /></FormulaInput>
      </FormulaBar>

      <ColHeaders>
        <Corner />
        {columns.map(([c, w, on]) => <ColHead key={c || 'end'} $w={w} $on={on}>{c}</ColHead>)}
      </ColHeaders>

      <Work>
        <RowHeads>
          {rows.map(([n, h, on]) => <RowHead key={n} $h={h} $on={on}>{n}</RowHead>)}
          <RowHead />
        </RowHeads>
        <Sheet>
          <NavBar>
            <Logo>
              <BulbLogo />
              <LogoWord>LUZ</LogoWord>
              <LogoTag>Planilhas<br />Empresariais</LogoTag>
            </Logo>
            {navItems.map(n => <NavItem key={n} $on={n === 'CICLO PDCA'}>{n}</NavItem>)}
          </NavBar>
          <SubBar>
            <VideoBtn><PlayBadge /></VideoBtn>
            <SubTab $w={118} $on>CICLO PDCA</SubTab>
            <SubTab $w={156}>PLANOS DE AÇÃO</SubTab>
          </SubBar>

          <ProblemLabel>Escolha um problema/processo:</ProblemLabel>
          <ProblemCell>
            Máquinas com muito defeitos
            <FillHandle />
            <DropBtn><Caret $c="#666" /></DropBtn>
          </ProblemCell>
          <Divider />

          <CausesHead>Causas</CausesHead>
          <CausesList>
            <CauseRow>Falta de manutenção</CauseRow>
            <CauseRow>Manuseio errado</CauseRow>
            <CauseRow>Marca sem credibilidade</CauseRow>
          </CausesList>

          <MetricLabel $col="8 / 10" $row={7}>Nível crítico inicial</MetricLabel>
          <MetricValue $col="8 / 10" $row="8 / 10" $bg="#f44831">83</MetricValue>
          <MetricLabel $col="11 / 13" $row={7}>Nível crítico final</MetricLabel>
          <MetricValue $col="11 / 13" $row="8 / 10" $bg="#ffc000">57</MetricValue>

          <MetricLabel $col="2 / 4" $row={11} $low>Quantidade de ações executadas</MetricLabel>
          <MetricValue $col="2 / 4" $row={12}>3</MetricValue>
          <MetricLabel $col="5 / 7" $row={11} $low>Ocorreram como planejado</MetricLabel>
          <MetricValue $col="5 / 7" $row={12}>1</MetricValue>
          <MetricLabel $col="8 / 10" $row={11} $low>Contribuíram para resolver o problema</MetricLabel>
          <MetricValue $col="8 / 10" $row={12}>1</MetricValue>
          <MetricLabel $col="11 / 13" $row={11} $fs={14.8}>Problema/Processo resolvido?</MetricLabel>
          <MetricValue $col="11 / 13" $row={12} $bg="#339933" $fs={29}>Sim</MetricValue>

          <MetricLabel $col="2 / 4" $row={14} $low>Feedback</MetricLabel>
          <Feedback>O nível crítico melhorou e o problema foi resolvido - realize as ações propostas e priorize fazer o ciclo PDCA em outros problemas ou processos</Feedback>
        </Sheet>
        <VScroll>
          <ScrollBtn $h={14}><Caret $rot={180} $c="#777" /></ScrollBtn>
          <VTrack>
            <Thumb $h={17} />
            <Spacer />
          </VTrack>
          <ScrollBtn $h={15}><Caret $c="#777" /></ScrollBtn>
        </VScroll>
      </Work>

      <TabsWrap>
        <SheetTabs>
          {sheetTabs.map(([t, w, on, last]) => <SheetTab key={t} $w={w} $on={on} $last={last}>{t}</SheetTab>)}
          <Plus>+</Plus>
        </SheetTabs>
        <NavArrows>
          <Caret $c="#c4c4c4" $rot={90} />
          <Caret $c="#c4c4c4" $rot={-90} />
        </NavArrows>
        <TabDots><i /><i /><i /><i /></TabDots>
        <HScroll>
          <ScrollBtn $w={15} $h={15}><Caret $c="#777" $rot={90} /></ScrollBtn>
          <HTrack>
            <Thumb $w={58} $h={15} />
            <Spacer />
          </HTrack>
          <ScrollBtn $w={14} $h={15}><Caret $c="#777" $rot={-90} /></ScrollBtn>
        </HScroll>
      </TabsWrap>

      <StatusBar>
        <Ready>Pronto</Ready>
        <Slot $w={13}><MacroIcon /></Slot>
        <Spacer />
        <ViewBtn $on><GridView /></ViewBtn>
        <ViewBtn><PageView /></ViewBtn>
        <ViewBtn><BreakView /></ViewBtn>
        <Zoom>
          <Slot $w={14} $c="#555" $fs={14} $fw={700}>-</Slot>
          <ZoomTrack />
          <Slot $w={14} $c="#555" $fs={14} $fw={700}>+</Slot>
          <Slot $w={32} $c="#444" $fs={11.6}>90%</Slot>
        </Zoom>
      </StatusBar>
      <Taskbar>
        <TaskPart $w={48} $c="#1a2a24" />
        <TaskPart $w={344} $c="#b8b8b8" />
        <TaskPart $w={297} $c="#1a2a24" />
        <TaskPart $w={48} $c="#444" />
      </Taskbar>
    </Page>
  );
}
